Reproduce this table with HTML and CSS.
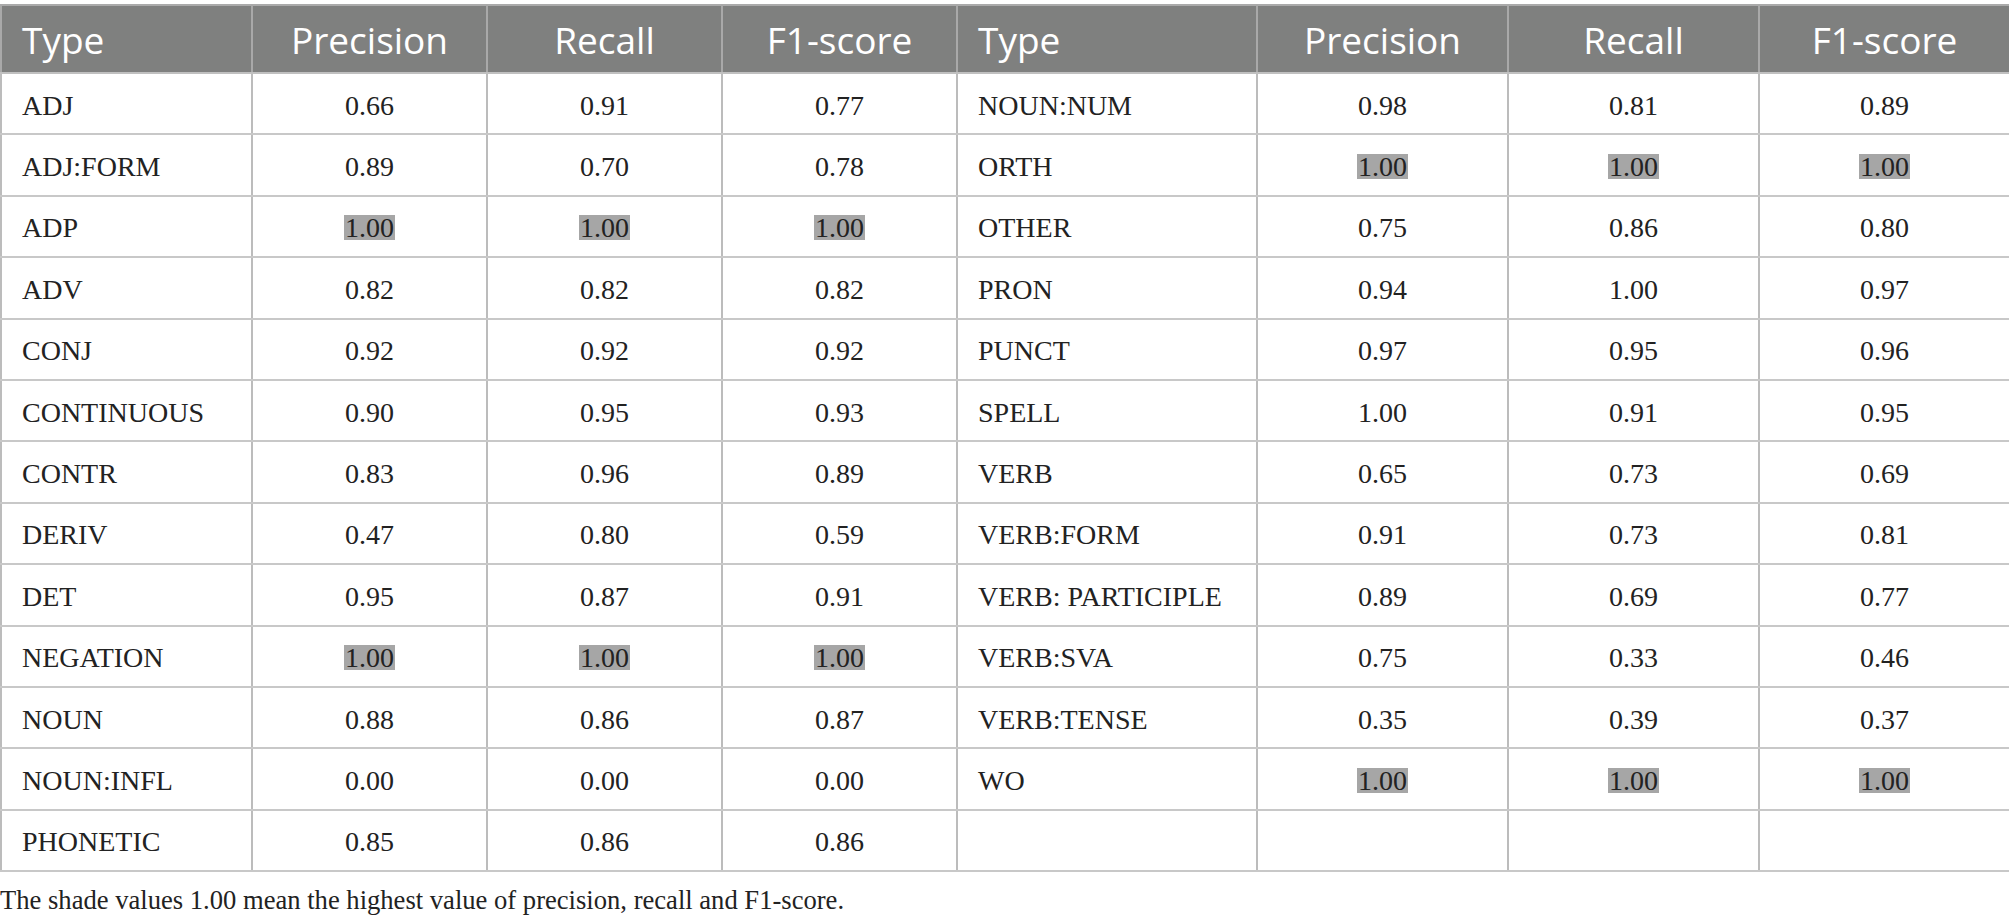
FILE: index.html
```html
<!DOCTYPE html>
<html>
<head>
<meta charset="utf-8">
<link rel="stylesheet" href="styles.css">
</head>
<body>
<table class="results">
  <colgroup>
    <col class="c-type"><col class="c-num"><col class="c-num"><col class="c-num">
    <col class="c-type2"><col class="c-num2"><col class="c-num2"><col class="c-num2">
  </colgroup>
  <thead>
    <tr>
      <th class="lbl">Type</th><th>Precision</th><th>Recall</th><th>F1-score</th>
      <th class="lbl">Type</th><th>Precision</th><th>Recall</th><th>F1-score</th>
    </tr>
  </thead>
  <tbody>
    <tr><td class="lbl">ADJ</td><td>0.66</td><td>0.91</td><td>0.77</td><td class="lbl">NOUN:NUM</td><td>0.98</td><td>0.81</td><td>0.89</td></tr>
    <tr><td class="lbl">ADJ:FORM</td><td>0.89</td><td>0.70</td><td>0.78</td><td class="lbl">ORTH</td><td><span class="hl">1.00</span></td><td><span class="hl">1.00</span></td><td><span class="hl">1.00</span></td></tr>
    <tr><td class="lbl">ADP</td><td><span class="hl">1.00</span></td><td><span class="hl">1.00</span></td><td><span class="hl">1.00</span></td><td class="lbl">OTHER</td><td>0.75</td><td>0.86</td><td>0.80</td></tr>
    <tr><td class="lbl">ADV</td><td>0.82</td><td>0.82</td><td>0.82</td><td class="lbl">PRON</td><td>0.94</td><td>1.00</td><td>0.97</td></tr>
    <tr><td class="lbl">CONJ</td><td>0.92</td><td>0.92</td><td>0.92</td><td class="lbl">PUNCT</td><td>0.97</td><td>0.95</td><td>0.96</td></tr>
    <tr><td class="lbl">CONTINUOUS</td><td>0.90</td><td>0.95</td><td>0.93</td><td class="lbl">SPELL</td><td>1.00</td><td>0.91</td><td>0.95</td></tr>
    <tr><td class="lbl">CONTR</td><td>0.83</td><td>0.96</td><td>0.89</td><td class="lbl">VERB</td><td>0.65</td><td>0.73</td><td>0.69</td></tr>
    <tr><td class="lbl">DERIV</td><td>0.47</td><td>0.80</td><td>0.59</td><td class="lbl">VERB:FORM</td><td>0.91</td><td>0.73</td><td>0.81</td></tr>
    <tr><td class="lbl">DET</td><td>0.95</td><td>0.87</td><td>0.91</td><td class="lbl">VERB: PARTICIPLE</td><td>0.89</td><td>0.69</td><td>0.77</td></tr>
    <tr><td class="lbl">NEGATION</td><td><span class="hl">1.00</span></td><td><span class="hl">1.00</span></td><td><span class="hl">1.00</span></td><td class="lbl">VERB:SVA</td><td>0.75</td><td>0.33</td><td>0.46</td></tr>
    <tr><td class="lbl">NOUN</td><td>0.88</td><td>0.86</td><td>0.87</td><td class="lbl">VERB:TENSE</td><td>0.35</td><td>0.39</td><td>0.37</td></tr>
    <tr><td class="lbl">NOUN:INFL</td><td>0.00</td><td>0.00</td><td>0.00</td><td class="lbl">WO</td><td><span class="hl">1.00</span></td><td><span class="hl">1.00</span></td><td><span class="hl">1.00</span></td></tr>
    <tr><td class="lbl">PHONETIC</td><td>0.85</td><td>0.86</td><td>0.86</td><td class="lbl"></td><td></td><td></td><td></td></tr>
  </tbody>
</table>
<p class="caption">The shade values 1.00 mean the highest value of precision, recall and F1-score.</p>
</body>
</html>
```

FILE: styles.css
```css
html, body {
  margin: 0;
  padding: 0;
  background: #ffffff;
}

body {
  padding-top: 4px;
  font-family: "Liberation Serif", "Times New Roman", serif;
  color: #222222;
}

.results {
  width: 2009px;
  table-layout: fixed;
  border-collapse: collapse;
}

.c-type { width: 251px; }
.c-num { width: 235px; }
.c-type2 { width: 300px; }
.c-num2 { width: 251px; }

.results th,
.results td {
  border-left: 2px solid #bcbcbc;
  border-right: 2px solid #bcbcbc;
  border-bottom: 2px solid #c8c8c8;
  padding: 0;
  text-align: center;
  vertical-align: middle;
}

.results th {
  height: 66px;
  background: #7f807f;
  color: #ffffff;
  font-family: "Open Sans", "Noto Sans", sans-serif;
  font-weight: 400;
  font-size: 37px;
  border-top: 2px solid #aaaaaa;
  border-bottom: 2px solid #c0c0c0;
  border-left-color: #a9a9a9;
  border-right-color: #a9a9a9;
}

.results td {
  height: 55.4px;
  font-size: 28px;
  padding-top: 4px;
}

.results .lbl {
  text-align: left;
  padding-left: 20px;
}

.hl {
  display: inline-block;
  background: #a6a6a6;
  line-height: 25px;
  padding: 0 1px;
}

.caption {
  margin: 13px 0 0 0;
  font-size: 26.6px;
  color: #222222;
}
```
